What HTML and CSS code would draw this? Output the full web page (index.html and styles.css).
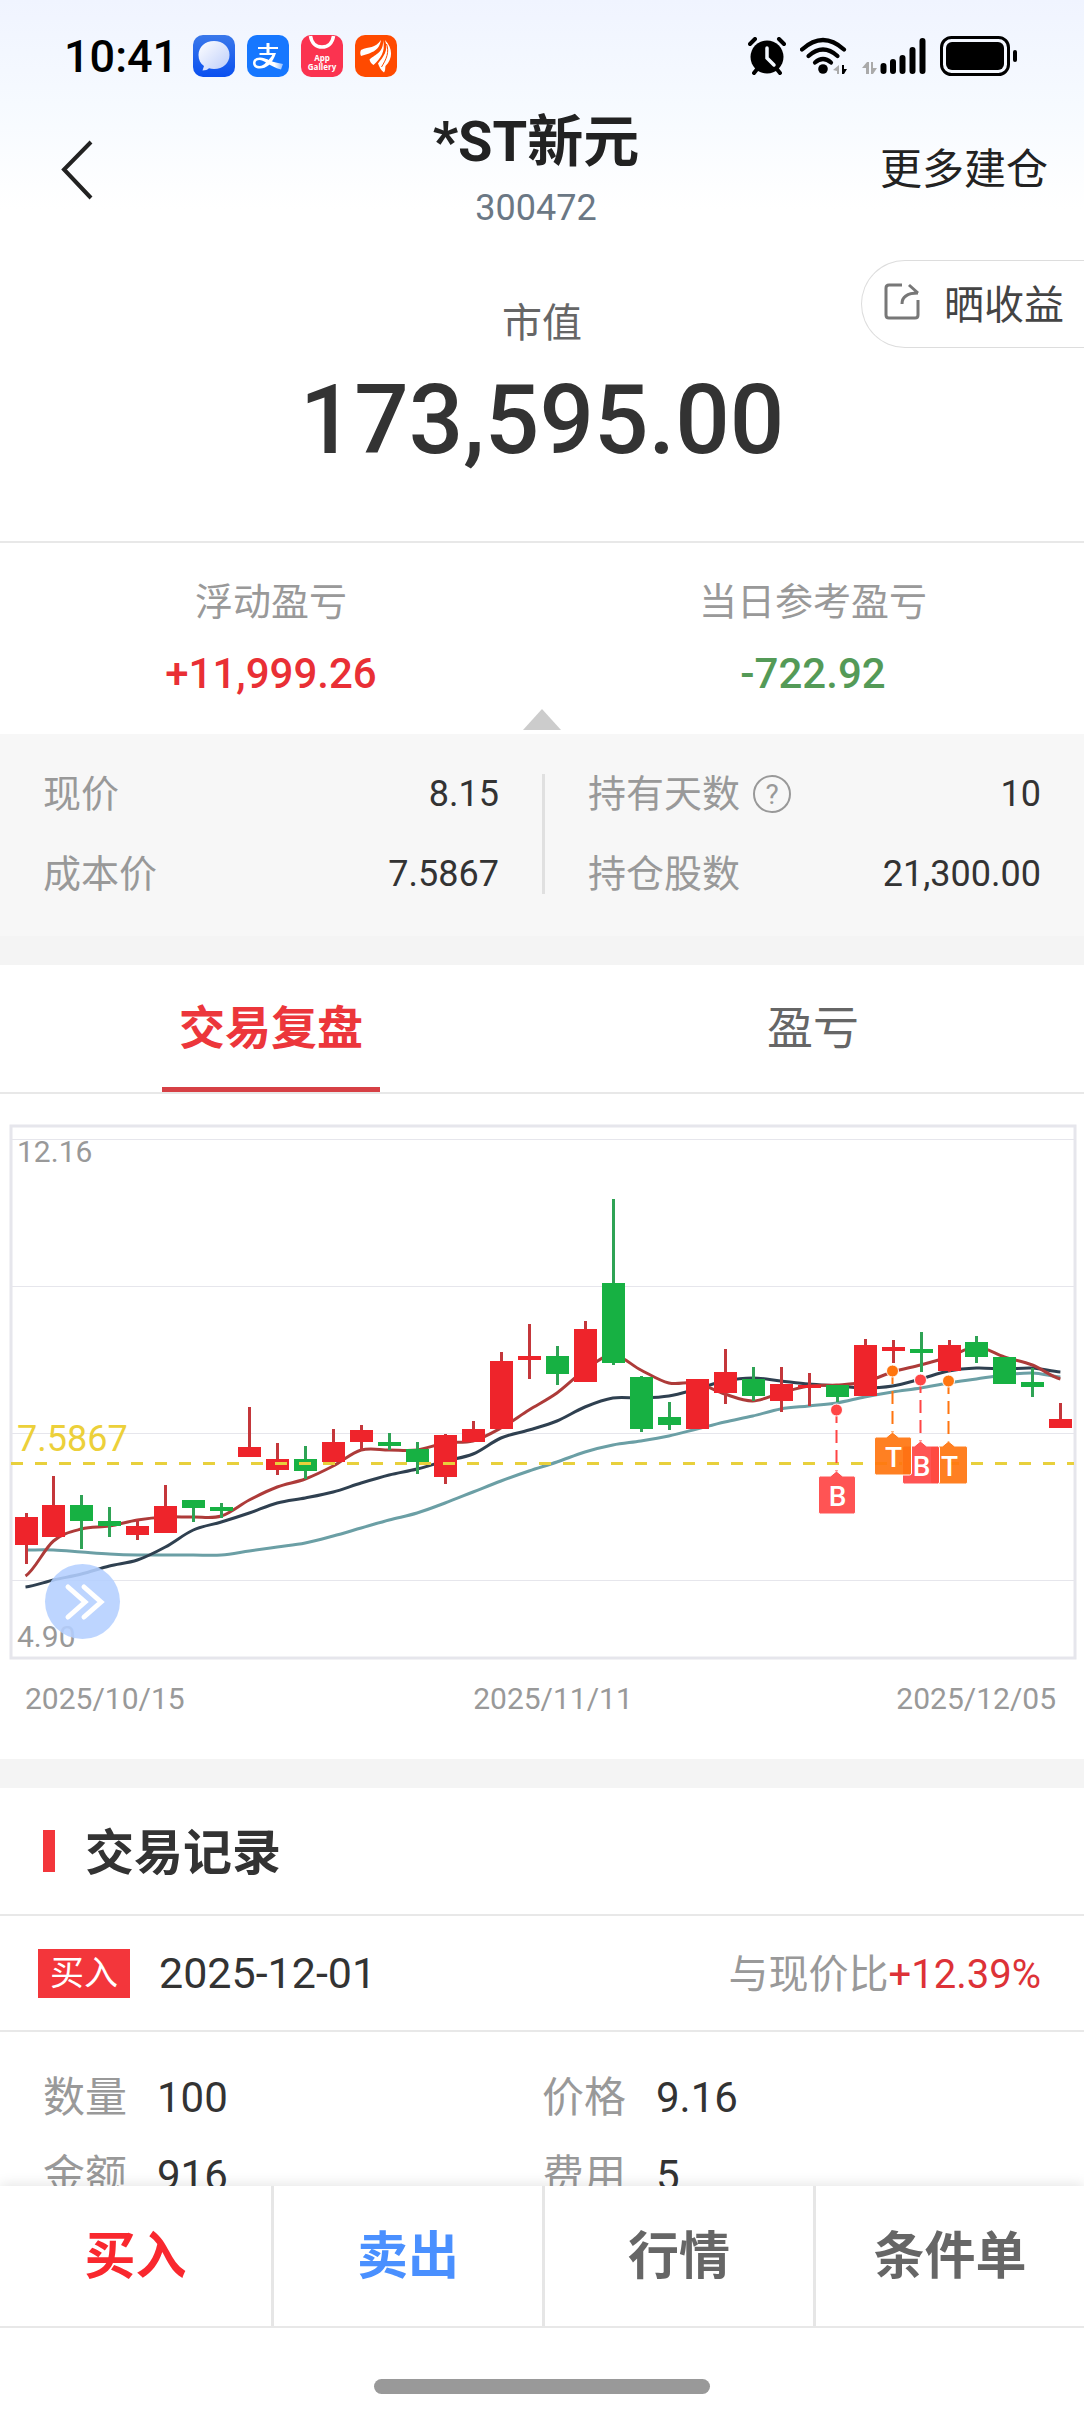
FILE: index.html
```html
<!DOCTYPE html>
<html lang="zh-CN">

<head>
    <meta charset="UTF-8">
    <meta name="viewport" content="width=device-width, initial-scale=1.0">
    <title>*ST新元 300472</title>
    <link rel="stylesheet" href="styles.css">
</head>

<body>
<div class="app">
    <div class="top">
        <div class="status">
            <span class="time">10:41</span>
            <div class="apps">
                <svg viewBox="0 0 42 42">
                    <defs>
                        <linearGradient id="msgBg" x1="0" y1="0" x2="0" y2="1">
                            <stop offset="0" stop-color="#3a78ea" />
                            <stop offset="1" stop-color="#0a50f0" />
                        </linearGradient>
                        <linearGradient id="msgBubble" x1="0" y1="0" x2="1" y2="1">
                            <stop offset="0" stop-color="#fff" />
                            <stop offset="1" stop-color="#bccdfa" />
                        </linearGradient>
                        <linearGradient id="payTail" x1="0" y1="0" x2="1" y2="0">
                            <stop offset="0.5" stop-color="#fff" />
                            <stop offset="1" stop-color="#8fbcff" />
                        </linearGradient>
                    </defs>
                    <rect width="42" height="42" rx="10" fill="url(#msgBg)" />
                    <path d="M21 6C12 6 5.500 12 5.500 20c0 5 2 8.500 5.500 11l-1.500 4.500c3 0 5-1 6.500-2.300 1.600.5 3.200.8 5 .8 9 0 15.500-6 15.500-14S30 6 21 6z" fill="url(#msgBubble)" />
                </svg>
                <svg viewBox="0 0 42 42">
                    <rect width="42" height="42" rx="10" fill="#1677ff" />
                    <path d="M19.500 8h3v4H31v2h-8.500v4H29c-1.500 5-4 9-7 12-3 2.500-6 3.500-9 3.500-5 0-7-2.500-7-5.500 0-3.500 3-5.500 7-5.500 3 0 5.500 1 8.500 2.500 2-2 3-3.500 3.700-5H12.500v-2h7v-4H11v-2h8.500zM19 27.500c-2.500-1.500-4.500-2.500-6.500-2.500-2.500 0-4 1.200-4 3s1.500 3 4 3c2.500 0 4.500-1.300 6.500-3.500z" fill="#fff" fill-rule="evenodd" />
                    <path d="M19 24c5 2 10 4 17 5l-2 5.500c-6-1.500-10-4-15-7z" fill="url(#payTail)" />
                </svg>
                <svg viewBox="0 0 42 42">
                    <rect width="42" height="42" rx="10" fill="#fb3350" />
                    <path d="M9.500 1c1 7 5.500 11 11.500 11S31.500 8 32.500 1" fill="none" stroke="#fff" stroke-width="3.500" />
                    <text class="gallery-text" x="21" y="26">App</text>
                    <text class="gallery-text" x="21" y="35">Gallery</text>
                </svg>
                <svg viewBox="0 0 42 42">
                    <rect width="42" height="42" rx="10" fill="#ff4a00" />
                    <g fill="#fff">
                        <path d="M26 5C20 14 14 11 6 15c-1 2-1 4 0 6C15 18 24 17 26 5z" />
                        <path d="M28 5c1 12-7 14-13.500 19.500 .5 2.500 2 4.500 4 5.500C25 24 31 17 28 5z" />
                        <path d="M30 5c4 11-2 17-7 23.500 1.500 4 3 7 6 9 1.500-2 1-4 1.500-6.500C38 24 38 13 30 5z" />
                    </g>
                    <path d="M31.500 9c3 8 0 15-5 23" fill="none" stroke="#ff4a00" />
                </svg>
            </div>
            <div class="signals">
                <!-- alarm -->
                <svg width="38" height="38" viewBox="0 0 38 38">
                    <circle cx="19" cy="20" r="16.500" />
                    <path d="M2 7l5-5M36 7l-5-5M6 36l4-5M32 36l-4-5" stroke="#000" stroke-width="4" stroke-linecap="round" />
                    <path d="M19 11v10l7 7" fill="none" stroke="#f3f8ff" stroke-width="3.500" stroke-linecap="round" />
                </svg>
                <!-- wifi -->
                <svg width="48" height="38" viewBox="0 0 48 38">
                    <g fill="none" stroke="#000" stroke-width="4.200" stroke-linecap="round">
                        <path d="M2 12.500Q23 -6.500 44 12.500" />
                        <path d="M8.500 19Q23 6 37.500 19" />
                        <path d="M15 25.500Q23 18.500 31 25.500" />
                    </g>
                    <circle cx="23" cy="32" r="4.800" />
                    <path d="M39 28v9h-2v-3l-4-1z" fill="#aaa" />
                    <path d="M42 28v9h2l3-5h-3v-4z" />
                </svg>
                <!-- mobile signal -->
                <svg width="64" height="38" viewBox="0 0 64 38">
                    <path d="M4 37V31H0L5 25H7V37zM9 25h2v6h4l-4 6H9z" fill="#aaa" />
                    <path d="M21.500 29v5M31 25v9M40.500 21v13M50.500 13v21M60.500 4v30" stroke="#000" stroke-width="6" stroke-linecap="round" />
                </svg>
                <!-- battery -->
                <svg width="78" height="40" viewBox="0 0 78 40">
                    <rect x="1.500" y="1.500" width="67" height="37" rx="10" fill="none" stroke="#000" stroke-width="3" />
                    <rect x="6" y="6" width="58" height="28" rx="6" />
                    <rect x="73" y="14" width="4" height="12" rx="2" />
                </svg>
            </div>
        </div>

        <header class="header">
            <button class="back" aria-label="返回">
                <svg width="34" height="60" viewBox="0 0 34 60">
                    <path d="M31 2L4 29.500 31 58" fill="none" stroke="#222" stroke-width="4" />
                </svg>
            </button>
            <div class="stock">
                <h1>*ST新元</h1>
                <p>300472</p>
            </div>
            <a class="more" href="#">更多建仓</a>
        </header>
    </div>

    <main class="content">
        <section class="summary">
            <button class="share">
                <svg width="36" height="38" viewBox="0 0 36 38">
                    <g fill="none" stroke="#777" stroke-width="3" stroke-linejoin="round">
                        <path d="M18 2H5Q2 2 2 5V32Q2 35 5 35H31Q34 35 34 32V17" />
                        <path d="M18 21C18 14 23 10 34 10M25 2L34 10" />
                    </g>
                </svg>
                晒收益
            </button>
            <p class="label">市值</p>
            <p class="amount">173,595.00</p>
        </section>

        <section class="profit">
            <div>
                <p class="label">浮动盈亏</p>
                <p class="value up">+11,999.26</p>
            </div>
            <div>
                <p class="label">当日参考盈亏</p>
                <p class="value down">-722.92</p>
            </div>
        </section>

        <section class="position">
            <dl>
                <div><dt>现价</dt><dd>8.15</dd></div>
                <div><dt>成本价</dt><dd>7.5867</dd></div>
            </dl>
            <dl>
                <div>
                    <dt>持有天数
                        <svg width="40" height="40" viewBox="0 0 40 40">
                            <circle cx="20" cy="20" r="18" fill="none" stroke="#999" stroke-width="2" />
                            <text class="help-mark" x="20" y="30">?</text>
                        </svg>
                    </dt>
                    <dd>10</dd>
                </div>
                <div><dt>持仓股数</dt><dd>21,300.00</dd></div>
            </dl>
        </section>

        <nav class="tabs">
            <button class="active">交易复盘</button>
            <button>盈亏</button>
        </nav>

        <section class="chart">
            <svg id="kline" viewBox="0 0 1084 600">
                <rect x="11" y="6" width="1064" height="532" fill="none" stroke="#e6e6ec" stroke-width="3" />
                <path d="M12 19.500H1074M12 166.500H1074M12 313.500H1074M12 460.500H1074" stroke="#e6e6ec" />
                <text class="axis" x="17" y="42">12.16</text>
                <text class="axis" x="17" y="527">4.90</text>
                <text class="cost" x="17" y="331">7.5867</text>
                <g id="averages"></g>
                <g id="candles"></g>
                <path d="M11 343.500H1074" stroke="#e8d03c" stroke-width="3" stroke-dasharray="12 12" />
                <g id="marks"></g>
                <circle cx="82.500" cy="481.500" r="37.500" fill="#b4cfff" fill-opacity="0.880" />
                <path d="M68 467l17 15-17 15M84 467l17 15-17 15" fill="none" stroke="#fff" stroke-width="5" stroke-linecap="round" />
                <text class="axis" x="25" y="589">2025/10/15</text>
                <text class="axis middle" x="553" y="589">2025/11/11</text>
                <text class="axis end" x="1056" y="589">2025/12/05</text>
            </svg>
        </section>

        <section class="records">
            <h2>交易记录</h2>
            <div class="record-head">
                <span class="tag">买入</span>
                <span class="date">2025-12-01</span>
                <span class="compare">与现价比<b>+12.39%</b></span>
            </div>
            <dl class="record-body">
                <div><dt>数量</dt><dd>100</dd></div>
                <div><dt>价格</dt><dd>9.16</dd></div>
                <div><dt>金额</dt><dd>916</dd></div>
                <div><dt>费用</dt><dd>5</dd></div>
            </dl>
        </section>
    </main>

    <footer class="bottom">
        <div class="actions">
            <button class="buy">买入</button>
            <button class="sell">卖出</button>
            <button>行情</button>
            <button>条件单</button>
        </div>
        <div class="home-bar"></div>
    </footer>
</div>

<script src="chart.js"></script>
</body>

</html>
```

FILE: styles.css
```css
* {
    box-sizing: border-box;
}

body {
    margin: 0;
    font-family: Roboto, "Noto Sans CJK SC", sans-serif;
    color: #333;
    background-color: #fff;
}

h1, h2, p, dl, dd {
    margin: 0;
}

button {
    font-family: inherit;
    color: inherit;
    padding: 0;
    border: none;
    background: none;
}

svg {
    display: block;
}

.app {
    display: flex;
    flex-direction: column;
    height: 100vh;
}

.top {
    flex: none;
    background: linear-gradient(#f0f4ff, #f6faff 45%, #fff 90%);
}

/* status bar */
.status {
    display: flex;
    align-items: center;
    height: 112px;
    padding: 0 66px 0 64px;
    color: #000;
}

.time {
    width: 129px;
    font-size: 45px;
    font-weight: 500;
}

.apps {
    display: flex;
    gap: 12px;
}

.apps svg {
    width: 42px;
    height: 42px;
}

.gallery-text {
    font-family: "Open Sans", sans-serif;
    font-size: 8px;
    font-weight: bold;
    fill: #fff;
    text-anchor: middle;
}

.signals {
    display: flex;
    align-items: center;
    gap: 14px;
    margin-left: auto;
}

/* header */
.header {
    display: grid;
    grid-template-columns: 1fr auto 1fr;
    align-items: center;
    padding: 0 36px 4px 24px;
}

.back {
    justify-self: start;
    margin-left: 36px;
}

.stock {
    text-align: center;
}

.stock h1 {
    font-size: 56px;
    line-height: 60px;
    color: #222;
}

.stock p {
    margin-top: 16px;
    font-size: 36px;
    line-height: 40px;
    color: #6b7885;
}

.more {
    justify-self: end;
    font-size: 42px;
    line-height: 48px;
    color: #222;
    text-decoration: none;
}

.content {
    flex: 1;
    min-height: 0;
    overflow-y: auto;
    scrollbar-width: none;
}

/* market value */
.summary {
    position: relative;
    padding: 68px 0 73px;
    text-align: center;
    border-bottom: 2px solid #e8e8e8;
}

.summary .label {
    font-size: 40px;
    line-height: 48px;
    color: #666;
}

.amount {
    margin-top: 24px;
    font-size: 96px;
    line-height: 96px;
    font-weight: 500;
}

.share {
    position: absolute;
    top: 28px;
    right: 0;
    display: flex;
    align-items: center;
    gap: 24px;
    height: 88px;
    padding: 0 20px 4px 22px;
    font-size: 40px;
    color: #444;
    background-color: #fff;
    border: 1px solid #ddd;
    border-right: none;
    border-radius: 44px 0 0 44px;
}

/* profit and loss */
.profit {
    position: relative;
    display: grid;
    grid-template-columns: 1fr 1fr;
    padding: 35px 0 36px;
    text-align: center;
}

.profit::after {
    content: "";
    position: absolute;
    left: 50%;
    bottom: 4px;
    margin-left: -19px;
    border: 19px solid transparent;
    border-top: none;
    border-bottom: 21px solid #ccc;
}

.profit .label {
    font-size: 38px;
    line-height: 48px;
    color: #999;
}

.value {
    margin-top: 24px;
    font-size: 42px;
    line-height: 48px;
    font-weight: 500;
}

.up {
    color: #e92f35;
}

.down {
    color: #549a57;
}

.position {
    display: grid;
    grid-template-columns: 1fr 1fr;
    padding: 40px 0 42px;
    background-color: #f7f7f7;
}

.position dl {
    display: grid;
    gap: 40px;
    padding: 0 43px;
}

.position dl:last-child {
    border-left: 3px solid #e0e0e0;
}

.position dl > div {
    display: flex;
    align-items: center;
    justify-content: space-between;
    font-size: 38px;
    line-height: 40px;
}

.position dt {
    display: flex;
    gap: 12px;
    color: #999;
}

.position dd {
    font-size: 36px;
}

.help-mark {
    font-size: 28px;
    fill: #999;
    text-anchor: middle;
}

/* tabs */
.tabs {
    display: grid;
    grid-template-columns: 1fr 1fr;
    justify-items: center;
    border-top: 29px solid #f4f4f4;
    border-bottom: 2px solid #e8e8e8;
}

.tabs button {
    height: 127px;
    padding: 0 17px 4px;
    font-size: 46px;
    color: #666;
    border-bottom: 5px solid transparent;
}

.tabs .active {
    font-weight: bold;
    color: #ec363b;
    border-bottom-color: #d64045;
}

/* chart */
.chart {
    padding: 26px 0 39px;
}

.axis {
    font-size: 30px;
    fill: #999;
}

.middle {
    text-anchor: middle;
}

.end {
    text-anchor: end;
}

.cost {
    font-size: 36px;
    fill: #ecd03a;
}

.mark-text {
    font-family: Roboto, sans-serif;
    font-size: 28px;
    font-weight: 500;
    fill: #fff;
    text-anchor: middle;
}

/* records */
.records {
    border-top: 29px solid #f4f4f4;
}

.records h2 {
    display: flex;
    align-items: center;
    gap: 30px;
    height: 128px;
    padding: 0 43px 6px;
    font-size: 49px;
    border-bottom: 2px solid #e8e8e8;
}

.records h2::before {
    content: "";
    width: 12px;
    height: 42px;
    margin-top: 6px;
    background-color: #f3363b;
}

.record-head {
    display: flex;
    align-items: center;
    height: 116px;
    padding: 0 43px 0 38px;
    font-size: 43px;
    border-bottom: 2px solid #e8e8e8;
}

.tag {
    padding: 0 12px;
    font-size: 34px;
    line-height: 49px;
    color: #fff;
    background-color: #f3363b;
}

.date {
    margin-left: 29px;
}

.compare {
    margin-left: auto;
    padding-bottom: 4px;
    font-size: 40px;
    color: #999;
}

.compare b {
    font-weight: normal;
    color: #dd3237;
}

.record-body {
    display: grid;
    grid-template-columns: 1fr 1fr;
    row-gap: 28px;
    padding: 41px 43px;
    font-size: 42px;
    line-height: 50px;
}

.record-body div {
    display: flex;
    gap: 30px;
}

.record-body dt {
    color: #999;
}

/* bottom bar */
.bottom {
    position: relative;
    flex: none;
    background-color: #fff;
    box-shadow: 0 -2px 12px rgba(0, 0, 0, 0.1);
}

.actions {
    display: grid;
    grid-template-columns: repeat(4, 1fr);
    border-bottom: 2px solid #e8e8e8;
}

.actions button {
    height: 140px;
    padding-bottom: 8px;
    font-size: 51px;
    font-weight: bold;
    color: #666;
    border-left: 3px solid #e6e6e6;
}

.actions button:first-child {
    border-left: none;
}

.actions .buy {
    color: #f9282e;
}

.actions .sell {
    color: #4a90ff;
}

.home-bar {
    width: 336px;
    height: 15px;
    margin: 51px auto 18px;
    background-color: #999;
    border-radius: 8px;
}
```

FILE: chart.js
```js
var UP = '#ee242b';
var DOWN = '#17b143';
var FIRST_X = 25.5;
var STEP = 27.97;

// [up, wick top, body top, body bottom, wick bottom]
var candles = [
    [1, 393, 397, 425, 444], [1, 356, 385, 417, 417], [0, 375, 385, 401, 429], [0, 387, 401, 406, 417],
    [1, 399, 406, 415, 420], [1, 365, 386, 413, 413], [0, 380, 380, 388, 402], [0, 383, 387, 391, 398],
    [1, 287, 327, 337, 337], [1, 323, 339, 350, 355], [0, 326, 339, 351, 359], [1, 309, 322, 342, 342],
    [1, 305, 310, 322, 330], [0, 313, 322, 326, 330], [0, 322, 329, 342, 354], [1, 314, 315, 357, 364],
    [1, 301, 309, 322, 322], [1, 232, 241, 309, 309], [1, 204, 236, 240, 259], [0, 226, 236, 254, 265],
    [1, 201, 209, 262, 262], [0, 79, 163, 243, 245], [0, 256, 257, 309, 312], [0, 282, 297, 305, 310],
    [1, 259, 259, 309, 309], [1, 229, 252, 273, 284], [0, 247, 259, 276, 281], [1, 247, 264, 281, 292],
    [1, 253, 265, 268, 286], [0, 265, 265, 277, 282], [1, 219, 225, 276, 276], [1, 220, 227, 231, 243],
    [0, 212, 229, 233, 252], [1, 220, 225, 251, 252], [0, 216, 222, 237, 243], [0, 237, 237, 264, 264],
    [0, 248, 262, 267, 277], [1, 283, 299, 308, 308]
];

var averages = [
    ['#6b9fa5', [430, 430, 432, 434, 435, 435, 435, 435, 431, 427, 423, 416, 408, 400, 393, 383, 372, 361, 351, 342,
        332, 325, 321, 316, 309, 302, 296, 289, 286, 283, 277, 272, 268, 263, 259, 255, 253, 257]],
    ['#2f4050', [467, 460, 454, 446, 440, 427, 410, 402, 393, 383, 378, 372, 363, 355, 349, 341, 334, 318, 310, 301,
        287, 278, 278, 276, 269, 261, 258, 261, 264, 266, 268, 266, 259, 251, 248, 249, 248, 252]],
    ['#ad3b39', [456, 421, 409, 406, 400, 397, 397, 396, 380, 367, 359, 346, 330, 330, 330, 323, 321, 308, 290, 273,
        250, 235, 250, 263, 263, 274, 281, 273, 266, 265, 262, 252, 245, 237, 227, 237, 245, 259]]
];

// later marks lie on top of earlier ones
var marks = [
    { type: 'T', x: 948.5, dot: 261, box: 326 },
    { type: 'B', x: 920.5, dot: 260, box: 326 },
    { type: 'T', x: 892.5, dot: 251, box: 317 },
    { type: 'B', x: 836.5, dot: 290, box: 356 }
];

function xOf(i) {
    return FIRST_X + i * STEP;
}

function drawAverages() {
    var output = '';
    averages.forEach(function (line) {
        var v = line[1];
        var d = 'M' + xOf(0) + ' ' + v[0];
        for (var i = 0; i < v.length - 1; i++) {
            var before = v[Math.max(i - 1, 0)];
            var after = v[Math.min(i + 2, v.length - 1)];
            d += 'C' + (xOf(i) + STEP / 3) + ' ' + (v[i] + (v[i + 1] - before) / 6) + ' ' +
                (xOf(i + 1) - STEP / 3) + ' ' + (v[i + 1] - (after - v[i]) / 6) + ' ' +
                xOf(i + 1) + ' ' + v[i + 1];
        }
        output += '<path d="' + d + '" fill="none" stroke="' + line[0] + '" stroke-width="3" />';
    });
    document.getElementById('averages').innerHTML = output;
}

function drawCandles() {
    var output = '';
    candles.forEach(function (c, i) {
        var x = Math.round(xOf(i));
        var color = c[0] ? UP : DOWN;
        var wick = c[0] ? '#c4373b' : '#2fa355';
        output += '<rect x="' + (x - 1) + '" y="' + c[1] + '" width="3" height="' + (c[4] - c[1]) + '" fill="' + wick + '" />' +
            '<rect x="' + (x - 11) + '" y="' + c[2] + '" width="23" height="' + (c[3] - c[2]) + '" fill="' + color + '" />';
    });
    document.getElementById('candles').innerHTML = output;
}

function drawMarks() {
    var output = '';
    marks.forEach(function (m) {
        var color = m.type == 'B' ? '#ff4545' : '#ff750f';
        output += '<path d="M' + m.x + ' ' + m.dot + 'V' + (m.box - 4) + '" stroke="' + color + '" stroke-width="2" stroke-dasharray="13 7" />' +
            '<circle cx="' + m.x + '" cy="' + m.dot + '" r="6" fill="' + color + '" stroke="#fff" />' +
            '<path d="M' + (m.x - 16) + ' ' + m.box + 'h10l6 -5 6 5h11q2 0 2 2v34q0 2 -2 2h-33q-2 0 -2 -2v-34q0 -2 2 -2z" fill="' + color + '" fill-opacity="0.920" stroke="#fff" />' +
            '<text class="mark-text" x="' + (m.x + 1) + '" y="' + (m.box + 30) + '">' + m.type + '</text>';
    });
    document.getElementById('marks').innerHTML = output;
}

drawAverages();
drawCandles();
drawMarks();
```
